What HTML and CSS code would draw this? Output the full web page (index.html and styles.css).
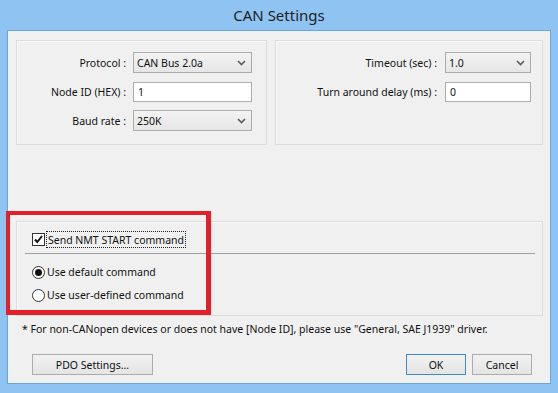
FILE: index.html
```html
<!DOCTYPE html>
<html>
<head>
<meta charset="utf-8">
<link rel="stylesheet" href="styles.css">
</head>
<body>
<div class="window">
  <div class="titlebar">CAN Settings</div>
  <div class="client">
    <div class="top-row">
      <div class="group group-left">
        <div class="form form-left">
          <label class="lbl">Protocol :</label>
          <div class="select"><span>CAN Bus 2.0a</span><svg class="chev" width="9" height="6" viewBox="0 0 9 6"><path d="M1 1 L4.5 4.5 L8 1" fill="none" stroke="#5a5a5a" stroke-width="1.6"/></svg></div>
          <label class="lbl">Node ID (HEX) :</label>
          <div class="input">1</div>
          <label class="lbl">Baud rate :</label>
          <div class="select"><span>250K</span><svg class="chev" width="9" height="6" viewBox="0 0 9 6"><path d="M1 1 L4.5 4.5 L8 1" fill="none" stroke="#5a5a5a" stroke-width="1.6"/></svg></div>
        </div>
      </div>
      <div class="group group-right">
        <div class="form form-right">
          <label class="lbl">Timeout (sec) :</label>
          <div class="select"><span>1.0</span><svg class="chev" width="9" height="6" viewBox="0 0 9 6"><path d="M1 1 L4.5 4.5 L8 1" fill="none" stroke="#5a5a5a" stroke-width="1.6"/></svg></div>
          <label class="lbl">Turn around delay (ms) :</label>
          <div class="input">0</div>
        </div>
      </div>
    </div>
    <div class="group group-bottom">
      <div class="check-row">
        <span class="checkbox"><svg width="11" height="11" viewBox="0 0 11 11"><path d="M2 5.5 L4.3 8 L9 2" fill="none" stroke="#111" stroke-width="2"/></svg></span>
        <span class="focus">Send NMT START command</span>
      </div>
      <div class="sep"></div>
      <div class="radio-row"><span class="radio checked"></span><span>Use default command</span></div>
      <div class="radio-row second"><span class="radio"></span><span>Use user-defined command</span></div>
    </div>
    <div class="note">* For non-CANopen devices or does not have [Node ID], please use "General, SAE J1939" driver.</div>
    <div class="buttons">
      <div class="btn btn-pdo">PDO Settings...</div>
      <div class="spacer"></div>
      <div class="btn btn-ok">OK</div>
      <div class="btn btn-cancel">Cancel</div>
    </div>
  </div>
  <div class="annotation"></div>
</div>
</body>
</html>
```

FILE: styles.css
```css
* { box-sizing: border-box; }
html, body { margin: 0; padding: 0; }
body {
  font-family: "Noto Sans", "Liberation Sans", sans-serif;
  font-size: 10.5px;
  color: #111;
}
.window {
  position: relative;
  width: 558px;
  height: 393px;
  background: #8fc3f1;
  padding: 0 7px 9px 7px;
  display: flex;
  flex-direction: column;
}
.titlebar {
  height: 30px;
  display: flex;
  align-items: center;
  justify-content: center;
  font-size: 15px;
  color: #1e1e1e;
  padding-bottom: 1px;
}
.client {
  flex: 1;
  background: #f0f0f0;
  border: 1px solid #6aa6dc;
  padding: 9px 7px 0 8px;
  display: flex;
  flex-direction: column;
}
.top-row {
  display: flex;
  gap: 8px;
  height: 105px;
}
.group {
  border: 1px solid #dcdcdc;
  box-shadow: inset 1px 1px 0 #fafafa;
}
.group-left { width: 251px; }
.group-right { width: 268px; }
.form {
  display: grid;
  align-items: center;
  padding-top: 11px;
  row-gap: 8px;
  grid-auto-rows: 21px;
}
.form-left { grid-template-columns: 109px 119px; column-gap: 7px; }
.form-right { grid-template-columns: 161px 86px; column-gap: 8px; }
.lbl {
  text-align: right;
  white-space: nowrap;
}
.select {
  height: 21px;
  border: 1px solid #acacac;
  background: linear-gradient(#f3f3f3, #e6e6e6);
  display: flex;
  align-items: center;
  justify-content: space-between;
  padding: 0 5px 0 3px;
}
.chev { display: block; }
.input {
  height: 20px;
  border: 1px solid #abadb3;
  background: #fff;
  display: flex;
  align-items: center;
  padding-left: 4px;
}
.group-bottom {
  margin-top: 76px;
  height: 95px;
  padding: 9px 7px 0 15px;
}
.check-row {
  display: flex;
  align-items: center;
  height: 17px;
}
.checkbox {
  width: 13px;
  height: 13px;
  border: 1px solid #333;
  background: #fff;
  display: flex;
  align-items: center;
  justify-content: center;
  margin-right: 1px;
}
.checkbox svg { display: block; }
.focus {
  border: 1px dotted #222;
  padding: 0 1px;
  height: 17px;
  display: flex;
  align-items: center;
}
.sep {
  margin: 5px 0 0 -7px;
  height: 1px;
  background: #a0a0a0;
}
.radio-row {
  display: flex;
  align-items: center;
  height: 16px;
  margin-top: 10px;
  gap: 2px;
}
.radio-row.second { margin-top: 7px; }
.radio {
  width: 13px;
  height: 13px;
  border: 1px solid #333;
  border-radius: 50%;
  background: #fff;
  display: flex;
  align-items: center;
  justify-content: center;
}
.radio.checked::after {
  content: "";
  width: 7px;
  height: 7px;
  border-radius: 50%;
  background: #111;
}
.note {
  margin: 6px 0 0 6px;
  height: 14px;
  line-height: 14px;
  white-space: nowrap;
}
.buttons {
  display: flex;
  margin-top: 18px;
  gap: 6px;
  padding: 0 11px 0 16px;
}
.spacer { flex: 1; }
.btn {
  height: 21px;
  border: 1px solid #acacac;
  background: linear-gradient(#f2f2f2, #e4e4e4);
  display: flex;
  align-items: center;
  justify-content: center;
}
.btn-pdo { width: 121px; }
.btn-ok { width: 60px; border-color: #3c8ad0; }
.btn-cancel { width: 60px; }
.annotation {
  position: absolute;
  left: 6px;
  top: 211px;
  width: 205px;
  height: 104px;
  border: 5px solid #e3202a;
  border-width: 4px 5px 5px 4px;
}
```
